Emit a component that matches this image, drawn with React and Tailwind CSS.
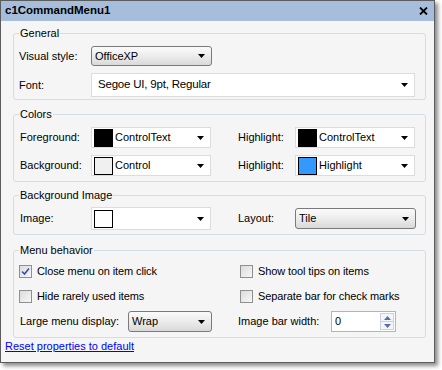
import React from 'react';

const font = { fontFamily: '"Liberation Sans", Arial, sans-serif' };

const Arrow = () => (
  <svg width="7" height="4" viewBox="0 0 7 4" className="shrink-0">
    <path d="M0 0H7L3.5 4Z" fill="#000" />
  </svg>
);

const ListSelect = ({ value, className = '' }) => (
  <div className={`flex items-center justify-between rounded-[3px] border border-[#7a7a7a] bg-gradient-to-b from-[#fbfbfb] via-[#ececec] to-[#d9d9d9] pl-[3px] pr-[6px] ${className}`}>
    <span className="text-[11px] leading-none text-black">{value}</span>
    <Arrow />
  </div>
);

const ComboBox = ({ value, swatch, className = '', big }) => (
  <div className={`flex items-center border border-[#dcdcdc] bg-white pl-[2px] pr-[6px] ${className}`}>
    {swatch && <div className={`h-[18px] w-[19px] shrink-0 border border-black ${swatch}`} />}
    <span className={`${big ? 'text-[11.5px] pl-[4px] tracking-[-0.2px]' : 'text-[11px] pl-[2px]'} leading-none text-black`}>{value}</span>
    <div className="ml-auto"><Arrow /></div>
  </div>
);

const Check = ({ checked, label }) => (
  <div className="flex items-center gap-[5px]">
    <div className="flex h-[13px] w-[13px] items-center justify-center border border-[#8e8f8f] bg-gradient-to-br from-[#dcdcdc] to-[#f7f7f7]">
      {checked && (
        <svg width="9" height="9" viewBox="0 0 9 9">
          <path d="M1 4.5L3.5 7L8 1.5" fill="none" stroke="#3a4fae" strokeWidth="1.6" />
        </svg>
      )}
    </div>
    <span className="text-[11px] leading-none tracking-[-0.1px] text-black">{label}</span>
  </div>
);

const Group = ({ title, className = '', children }) => (
  <fieldset className={`rounded-[3px] border border-[#d3dde5] ${className}`}>
    <legend className="ml-[5px] px-[1px] text-[11px] leading-[12px] text-black">{title}</legend>
    {children}
  </fieldset>
);

const Label = ({ children, className = '' }) => (
  <span className={`text-[11px] leading-none text-black ${className}`}>{children}</span>
);

export default function App() {
  return (
    <div className="h-[370px] w-[442px] bg-white" style={font}>
      <div className="flex h-[363px] w-[435px] flex-col border border-[#5c5c5c] bg-[#f5f5f5] shadow-[3px_3px_4px_rgba(0,0,0,0.45)]">
        {/* Title bar */}
        <div className="flex h-[20px] shrink-0 items-center justify-between bg-[#a6bedc] pl-[4px] pr-[6px]">
          <span className="text-[11.5px] font-bold text-black">c1CommandMenu1</span>
          <svg width="9" height="8" viewBox="0 0 9 8">
            <path d="M1 0.5L8 7.5M8 0.5L1 7.5" stroke="#000" strokeWidth="1.8" />
          </svg>
        </div>

        <div className="flex flex-col pl-[12px] pr-[8px]">
          {/* General */}
          <Group title="General" className="mt-[6px] pb-[2px]">
            <div className="mt-[7px] flex items-center pl-[5px]">
              <Label className="w-[72px]">Visual style:</Label>
              <ListSelect value="OfficeXP" className="h-[20px] w-[121px]" />
            </div>
            <div className="mt-[7px] flex items-center pl-[5px] pr-[10px]">
              <Label className="w-[72px]">Font:</Label>
              <ComboBox value="Segoe UI, 9pt, Regular" className="h-[24px] flex-1" big />
            </div>
          </Group>

          {/* Colors */}
          <Group title="Colors" className="mt-[8px] pb-[5px]">
            <div className="mt-[7px] flex items-center pl-[6px]">
              <Label className="w-[71px]">Foreground:</Label>
              <ComboBox value="ControlText" swatch="bg-black" className="h-[21px] w-[120px]" />
              <Label className="ml-[27px] w-[57px]">Highlight:</Label>
              <ComboBox value="ControlText" swatch="bg-black" className="h-[21px] w-[120px]" />
            </div>
            <div className="mt-[7px] flex items-center pl-[6px]">
              <Label className="w-[71px]">Background:</Label>
              <ComboBox value="Control" swatch="bg-[#f0f0f0]" className="h-[21px] w-[120px]" />
              <Label className="ml-[27px] w-[57px]">Highlight:</Label>
              <ComboBox value="Highlight" swatch="bg-[#3399ff]" className="h-[21px] w-[120px]" />
            </div>
          </Group>

          {/* Background Image */}
          <Group title="Background Image" className="mt-[7px] pb-[4px]">
            <div className="mt-[6px] flex items-center pl-[6px]">
              <Label className="w-[71px]">Image:</Label>
              <ComboBox value="" swatch="bg-white" className="h-[23px] w-[120px]" />
              <Label className="ml-[27px] w-[57px]">Layout:</Label>
              <ListSelect value="Tile" className="h-[21px] w-[121px]" />
            </div>
          </Group>

          {/* Menu behavior */}
          <Group title="Menu behavior" className="mt-[9px] pb-[5px]">
            <div className="mt-[7px] grid h-[16px] grid-cols-[221px_1fr] items-center pl-[5px]">
              <Check checked label="Close menu on item click" />
              <Check label="Show tool tips on items" />
            </div>
            <div className="mt-[9px] grid h-[16px] grid-cols-[221px_1fr] items-center pl-[5px]">
              <Check label="Hide rarely used items" />
              <Check label="Separate bar for check marks" />
            </div>
            <div className="mt-[7px] flex items-center pl-[6px]">
              <Label className="w-[108px]">Large menu display:</Label>
              <ListSelect value="Wrap" className="h-[21px] w-[84px]" />
              <Label className="ml-[26px] w-[93px]">Image bar width:</Label>
              <div className="flex h-[21px] w-[65px] items-center border border-[#b5b5b5] bg-white">
                <span className="pl-[3px] text-[11px] leading-none text-black">0</span>
                <div className="ml-auto mr-[1px] flex h-[17px] w-[14px] flex-col border border-[#c9d3de] bg-[#f3f5f8]">
                  <div className="flex flex-1 items-center justify-center border-b border-[#c9d3de]">
                    <svg width="7" height="4" viewBox="0 0 7 4"><path d="M0 4H7L3.5 0Z" fill="#5a6fa8" /></svg>
                  </div>
                  <div className="flex flex-1 items-center justify-center">
                    <svg width="7" height="4" viewBox="0 0 7 4"><path d="M0 0H7L3.5 4Z" fill="#5a6fa8" /></svg>
                  </div>
                </div>
              </div>
            </div>
          </Group>
        </div>

        <div className="mt-[1px] pl-[4px] leading-[12px]">
          <span className="text-[11px] leading-[12px] text-[#0000ff] underline">Reset properties to default</span>
        </div>
      </div>
    </div>
  );
}
